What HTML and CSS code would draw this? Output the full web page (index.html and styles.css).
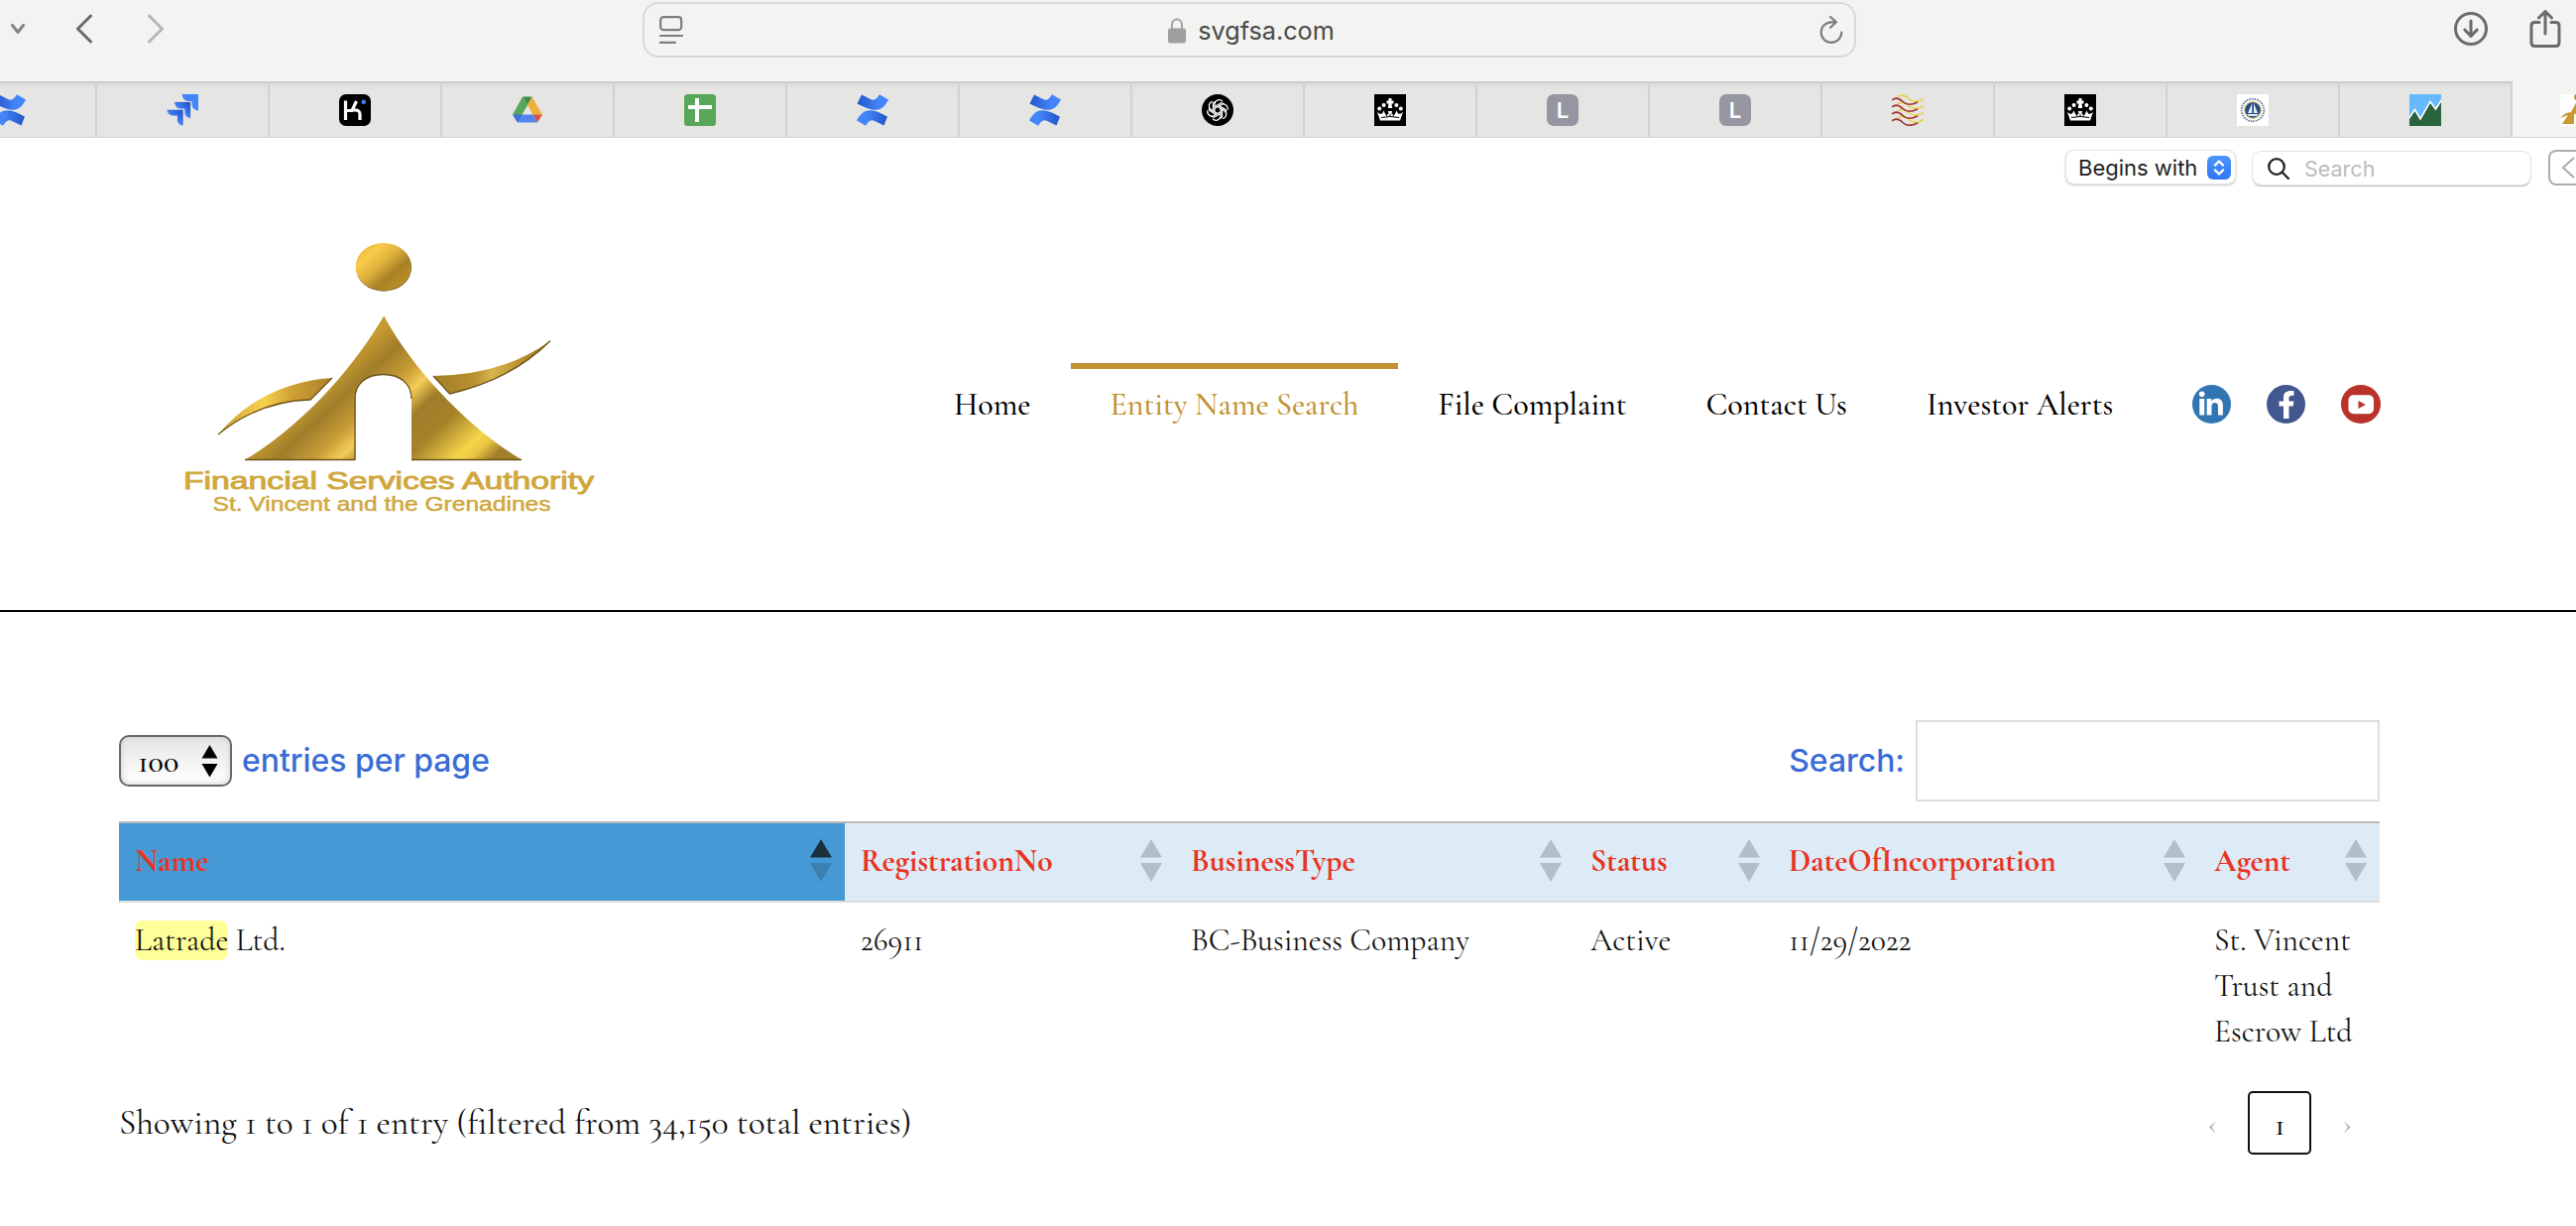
FILE: index.html
```html
<!DOCTYPE html>
<html lang="en">
<head>
<meta charset="utf-8">
<title>Entity Name Search</title>
<link rel="stylesheet" href="styles.css">
</head>
<body>
<svg class="defs" width="0" height="0">
  <defs>
    <linearGradient id="blueA" x1="0" y1="0" x2="1" y2="0"><stop offset="0" stop-color="#2355c8"/><stop offset=".7" stop-color="#4485fb"/></linearGradient>
    <linearGradient id="blueB" x1="1" y1="0" x2="0" y2="0"><stop offset="0" stop-color="#2355c8"/><stop offset=".7" stop-color="#4485fb"/></linearGradient>
    <linearGradient id="blueC" x1="1" y1="0" x2="0" y2="1"><stop offset="0.1" stop-color="#2355c8"/><stop offset=".6" stop-color="#4485fb"/></linearGradient>
    <symbol id="confluence" viewBox="0 0 32 32">
      <path fill="url(#blueA)" d="M5 .6 14 5c3 1.500 5 .5 7-2L23 .3 32 5.500C28 13 24 16 18 15.800c-6-.2-12-4-17.500-6.300Z"/>
      <path fill="url(#blueB)" d="M27.500 31.500 18 27c-3-1.500-5-.5-7 2L9 31.800 0 26.500C4 19 8 16 14 16.200c6 .2 12 4 17 6.300Z"/>
    </symbol>
    <symbol id="crown" viewBox="0 0 32 32">
      <rect width="32" height="32"/>
      <g fill="#fff"><path d="M14.500 4h3v2.500h2v3h-2l.7 4.500h-4.400l.7-4.500h-2v-3h2Z"/><circle cx="9.600" cy="11" r="2"/><circle cx="22.400" cy="11" r="2"/><circle cx="5.200" cy="14.400" r="2"/><circle cx="26.800" cy="14.400" r="2"/>
      <path d="M3 18c2 1.500 3 2.200 5 1.600l1.500-3 2 4.200 3-.8-.5-3h4l-.5 3 3 .8 2-4.200 1.500 3c2 .6 3-.1 5-1.600L26 26.500H6Z"/></g>
      <path d="M7 23.500q9-2 18 0M12 18.500l1 4M20 18.500l-1 4M16 20v3" stroke="#000" fill="none"/>
    </symbol>
  </defs>
</svg>

<header class="toolbar">
  <div class="nav-buttons">
    <svg class="caret" width="14" height="10" viewBox="0 0 14 10"><path d="m1.500 1.500 5.500 7 5.500-7"/></svg>
    <svg class="back" width="18" height="30" viewBox="0 0 18 30"><path d="M15.500 2 2.500 15l13 13"/></svg>
    <svg class="forward" width="18" height="30" viewBox="0 0 18 30"><path d="m2.500 2 13 13-13 13"/></svg>
  </div>
  <div class="address">
    <svg width="24" height="28" viewBox="0 0 24 28" class="line"><rect x="1.200" y="1.200" width="21" height="13" rx="3"/><path d="M1 20h22M1 26.800h15"/></svg>
    <div class="site">
      <svg width="18" height="26" viewBox="0 0 18 26"><path d="M4 11V7.500C4 4 6 1.500 9 1.500S14 4 14 7.500V11" fill="none" stroke="#a4a4a2" stroke-width="2"/><rect y="10.500" width="18" height="15" rx="2.500" fill="#9f9f9d"/></svg>
      <span>svgfsa.com</span>
    </div>
    <svg width="24" height="28" viewBox="0 0 24 28" class="line"><path d="M22.300 16.500A10.300 10.300 0 1 1 12 6.300h4.500M11 1l6 5.300-6 5.500"/></svg>
  </div>
  <div class="actions">
    <svg width="34" height="34" viewBox="0 0 34 34"><circle cx="17" cy="17" r="15.500"/><path d="M17 9v15M10.800 18l6.200 6.500 6.200-6.500"/></svg>
    <svg width="32" height="38" viewBox="0 0 32 38"><path d="M10 12.500H5.500q-3.500 0-3.500 3.500v17q0 3.500 3.500 3.500h21q3.500 0 3.500-3.500V16q0-3.500-3.500-3.500H22M16 24V2M9.500 8 16 1.500 22.500 8"/></svg>
  </div>
</header>

<nav class="tabs">
  <div class="tab first"><svg class="ico"><use href="#confluence"/></svg></div>
  <div class="tab"><svg class="ico" viewBox="0 0 32 32"><path fill="#4485fb" d="M15.500 0H32v16.500c-4-.5-6.500-3-6.500-6.500V7H22C18.500 7 16 4 15.500 0Z"/><path fill="url(#blueC)" stroke="#e5e5e3" stroke-width=".8" d="M7.500 7.500h17v17c-4-.5-6.500-3-6.500-6.500v-3h-4c-3.500 0-6-3.500-6.500-7.500Z"/><path fill="url(#blueC)" stroke="#e5e5e3" stroke-width=".8" d="M0 15.300h17V32c-4-.5-6.500-3-6.500-6.500V22H7c-4 0-6.500-2.700-7-6.700Z"/></svg></div>
  <div class="tab"><svg class="ico" viewBox="0 0 32 32"><rect width="32" height="32" rx="7"/><path d="M6.500 6.500v19.500M7 16.500h6l4.500-9.500M14.500 16q6.500-.5 6.500 4v6" fill="none" stroke="#fff" stroke-width="3.200"/><ellipse cx="24.800" cy="7.800" rx="2.300" ry="2.300" fill="#3b83f6"/></svg></div>
  <div class="tab"><svg class="ico" viewBox="0 0 32 32"><path fill="#57a65a" d="M11 2.500 16 11 6 28.500 1 20.500Z"/><path fill="#3d8c45" d="M11 2.500h9.500L16 11Z"/><path fill="#efb03b" d="M20.500 2.500 31 20.500h-9.500L16 11Z"/><path fill="#5086ee" d="M10.500 20.500h11L26 28.500H6Z"/><path fill="#3e6fdc" d="M1 20.500h9.500L6 28.500Z"/><path fill="#dc5142" d="M21.500 20.500H31L26 28.500Z"/></svg></div>
  <div class="tab"><svg class="ico" viewBox="0 0 32 32"><rect width="32" height="32" rx="3.500" fill="#57a65a"/><path d="M13 4v24M4 13h24" stroke="#fff" stroke-width="4"/></svg></div>
  <div class="tab"><svg class="ico"><use href="#confluence"/></svg></div>
  <div class="tab"><svg class="ico"><use href="#confluence"/></svg></div>
  <div class="tab"><svg class="ico" viewBox="0 0 32 32"><circle cx="16" cy="16" r="16"/><g fill="none" stroke="#fff" stroke-width="1.300"><path id="petal" d="M13 17.700V9.500a4.700 4.700 0 0 1 8-2.300M13 12.500l6.500-3.700a4.500 4.500 0 0 1 3 1.200"/><use href="#petal" transform="rotate(60 16 16)"/><use href="#petal" transform="rotate(120 16 16)"/><use href="#petal" transform="rotate(180 16 16)"/><use href="#petal" transform="rotate(240 16 16)"/><use href="#petal" transform="rotate(300 16 16)"/></g></svg></div>
  <div class="tab"><svg class="ico"><use href="#crown"/></svg></div>
  <div class="tab"><span class="letter">L</span></div>
  <div class="tab"><span class="letter">L</span></div>
  <div class="tab"><svg class="ico" viewBox="0 0 32 32"><g fill="none" stroke-width="1.600"><g stroke="#e8d24c"><path id="wave" d="M6 3c4-3.500 8-1.500 11 1.500s8 4.500 15 0"/><use href="#wave" y="7"/><use href="#wave" y="14"/><use href="#wave" y="21"/></g><g stroke="#a03038"><path id="wave2" d="M0 6c4-3.500 8-1.500 11 1.500s8 4 15 .5"/><use href="#wave2" y="7"/><use href="#wave2" y="14"/><use href="#wave2" y="21"/></g></g></svg></div>
  <div class="tab"><svg class="ico"><use href="#crown"/></svg></div>
  <div class="tab"><svg class="ico" viewBox="0 0 32 32"><rect width="32" height="32" fill="#fff"/><circle cx="16" cy="16" r="11.300" fill="none" stroke="#7286a8" stroke-width="2" stroke-dasharray="1.600 1"/><circle cx="16" cy="16" r="8.300" fill="#254a86" stroke="#d9c46a" stroke-width="1.200"/><path d="M15.300 9v10H11ZM17 9l4 10h-4ZM10 20h12l-2 2h-8Z" fill="#e6ebf2"/></svg></div>
  <div class="tab"><svg class="ico" viewBox="0 0 32 32"><rect width="32" height="32" fill="#66b9fb"/><path d="M-1 25 5.500 15.500 11 25 21 7.500 26.500 15 33 5v28H-1Z" fill="#2a643c" stroke="#fff" stroke-width="1.600"/></svg></div>
  <div class="tab active"><svg class="ico" viewBox="0 0 32 32"><rect width="32" height="32" fill="#fff"/><circle cx="17" cy="3" r="3" fill="#b98f2b"/><path d="M17 7 31 30H20v-9q-3-4-6 0v9H2L8 21 0 24q5-6 11-6Z" fill="#c69a30"/></svg></div>
</nav>

<div class="findbar">
  <div class="mode"><span>Begins with</span><i><svg width="24" height="24" viewBox="0 0 24 24"><path d="m8 9.500 4-4 4 4M8 14.500l4 4 4-4"/></svg></i></div>
  <div class="find"><svg width="22" height="22" viewBox="0 0 22 22"><circle cx="9" cy="9" r="7.800"/><path d="m14.500 14.500 6.500 6.500"/></svg><span>Search</span></div>
  <div class="prev"><svg width="14" height="22" viewBox="0 0 14 22"><path d="M13 1 2 11l11 10"/></svg></div>
</div>

<section class="masthead">
  <svg class="logo" width="460" height="320" viewBox="160 220 460 320">
    <defs>
      <linearGradient id="ball" x1="0" y1="0" x2="1" y2="1"><stop offset="0" stop-color="#dcae36"/><stop offset=".25" stop-color="#f8cb4a"/><stop offset=".45" stop-color="#dfb13c"/><stop offset=".65" stop-color="#a98126"/><stop offset="1" stop-color="#c79827"/></linearGradient>
      <linearGradient id="gold" gradientUnits="userSpaceOnUse" x1="325" y1="350" x2="470" y2="505"><stop offset="0" stop-color="#b88d2c"/><stop offset=".12" stop-color="#c99c31"/><stop offset=".24" stop-color="#a07d2a"/><stop offset=".36" stop-color="#c99d36"/><stop offset=".44" stop-color="#f3cd57"/><stop offset=".53" stop-color="#a07d2a"/><stop offset=".66" stop-color="#a68229"/><stop offset=".82" stop-color="#f6d64a"/><stop offset=".87" stop-color="#e8c341"/><stop offset=".94" stop-color="#a07d2a"/><stop offset="1" stop-color="#a68229"/></linearGradient>
      <linearGradient id="goldLeft" gradientUnits="userSpaceOnUse" x1="305" y1="390" x2="365" y2="465"><stop offset="0" stop-color="#c99d36"/><stop offset=".3" stop-color="#a58029"/><stop offset=".6" stop-color="#c99a32"/><stop offset=".9" stop-color="#f3cd57"/><stop offset="1" stop-color="#d7ac3f"/></linearGradient>
      <linearGradient id="left" x1="0" y1="0" x2="1" y2="0"><stop offset="0" stop-color="#c99d32"/><stop offset=".4" stop-color="#f8d24c"/><stop offset=".65" stop-color="#cfa035"/><stop offset="1" stop-color="#a98228"/></linearGradient>
      <linearGradient id="right" x1="0" y1="0" x2="1" y2="0"><stop offset="0" stop-color="#a37e28"/><stop offset=".35" stop-color="#b8902f"/><stop offset=".5" stop-color="#d6b450"/><stop offset=".75" stop-color="#b8912f"/><stop offset="1" stop-color="#8f6d20"/></linearGradient>
    </defs>
    <ellipse cx="387" cy="269.700" rx="28" ry="24" fill="#6d511b"/>
    <ellipse cx="386.700" cy="269" rx="28" ry="24" fill="url(#ball)"/>
    <path fill="url(#left)" d="M220 438Q264 386 335 381L313 403Q262 404 220 438Z"/>
    <path class="edge" d="M220 438Q262 404 313 403L335 381"/>
    <path fill="url(#right)" d="M437 379Q508 378 555 343.500 517 382 453.500 397Z"/>
    <path class="edge" d="M437 379 453.500 397Q517 382 555 343.500"/>
    <path fill="url(#gold)" d="M387.200 318.500C409 360 463 426 526 463.500H415V402C415 386 402 377.500 386.500 377.500S358.500 386 358.500 402V463.500H247C310 426 360 365 387.200 318.500Z"/>
    <path class="edge" d="M247 463.500h111V402c0-16 12.500-24.500 28.500-24.500s28.500 8.500 28.500 24.500M415 463.500H526"/>
    <text x="185" y="492.500" textLength="414" lengthAdjust="spacingAndGlyphs" class="brand big">Financial Services Authority</text>
    <text x="214.500" y="514.500" textLength="341" lengthAdjust="spacingAndGlyphs" class="brand small">St. Vincent and the Grenadines</text>
  </svg>
  <nav class="menu">
    <a>Home</a><a class="current">Entity Name Search</a><a>File Complaint</a><a>Contact Us</a><a>Investor Alerts</a>
  </nav>
  <div class="social">
    <svg width="39" height="39" viewBox="0 0 39 39"><circle cx="19.500" cy="19.500" r="19.500" fill="#3176b3"/><g fill="#fff"><circle cx="9.700" cy="9.300" r="2.800"/><path d="M7.300 14h4.900v16.500H7.300ZM14.700 14h4.700v2.300c2.500-4 11.500-4 11.500 4v10.200H26v-9.300c0-4.500-6.500-4.300-6.500 0v9.300h-4.800Z"/></g></svg>
    <svg width="39" height="39" viewBox="0 0 39 39"><circle cx="19.500" cy="19.500" r="19.500" fill="#42578f"/><path d="M17 34V21.500h-4.500v-5H17v-4.200C17 7.500 21 5.300 27.500 6.300v4.400c-4-.3-5 .3-5 2.800v3h5l-.8 5h-4.200V34Z" fill="#fff"/></svg>
    <svg width="40" height="39" viewBox="0 0 40 39"><ellipse cx="20" cy="19.500" rx="20" ry="19.500" fill="#ba332b"/><rect x="7.500" y="10.300" width="25.500" height="19" rx="5" fill="#fff"/><path d="m17.500 16 7.300 4-7.300 4Z" fill="#ba332b"/></svg>
  </div>
</section>

<main class="content">
  <div class="controls">
    <div class="length">
      <div class="select"><span>100</span><svg width="17" height="34" viewBox="0 0 17 34"><path d="M8.500 1 16.500 14.500H.5ZM.5 20H16.500L8.500 33.500Z"/></svg></div>
      <label>entries per page</label>
    </div>
    <div class="filter"><label>Search:</label><div class="input"></div></div>
  </div>
  <div class="grid head">
    <div class="sorted">Name<i class="sort"></i></div><div>RegistrationNo<i class="sort"></i></div><div>BusinessType<i class="sort"></i></div><div>Status<i class="sort"></i></div><div>DateOfIncorporation<i class="sort"></i></div><div>Agent<i class="sort"></i></div>
  </div>
  <div class="grid row">
    <div><mark>Latrade</mark> Ltd.</div><div>26911</div><div>BC-Business Company</div><div>Active</div><div>11/29/2022</div><div>St. Vincent Trust and Escrow Ltd</div>
  </div>
  <div class="footer">
    <div class="info">Showing 1 to 1 of 1 entry (filtered from 34,150 total entries)</div>
    <div class="pages"><span>‹</span><b>1</b><span>›</span></div>
  </div>
</main>
</body>
</html>
```
FILE: styles.css
```css
* { box-sizing: border-box; }
body { margin: 0; width: 2598px; height: 1236px; overflow: hidden; background: #fff; font-family: "Cormorant Garamond", "Liberation Serif", serif; color: #111; }
svg { display: block; flex: none; }
.defs { height: 0; }

.toolbar { display: grid; grid-template-columns: 648px 1224px 1fr; height: 82px; background: #f3f3f1; padding-top: 2px; font-family: Inter, sans-serif; }
.nav-buttons { display: flex; align-items: center; height: 54px; padding-left: 11px; fill: none; stroke-width: 3; stroke-linecap: round; stroke-linejoin: round; }
.caret { stroke: #858583; }
.back { stroke: #696967; margin-left: 51px; }
.forward { stroke: #b5b5b3; margin-left: 54px; }
.address { display: flex; align-items: center; justify-content: space-between; height: 56px; padding: 0 11px 0 15px; border: 2px solid #d8d8d6; border-radius: 16px; }
.line { fill: none; stroke: #7d7d7b; stroke-width: 2.2; stroke-linecap: round; stroke-linejoin: round; }
.site { display: flex; align-items: center; gap: 12px; font-size: 25.2px; color: #4a4a48; padding-top: 2px; }
.actions { display: flex; align-items: center; gap: 42px; height: 54px; padding-left: 603px; fill: none; stroke: #6b6b69; stroke-width: 3; stroke-linecap: round; stroke-linejoin: round; }

.tabs { display: flex; height: 57px; background: #e5e5e3; border-bottom: 1px solid #d4d4d2; overflow: hidden; }
.tab { flex: none; width: 174px; display: flex; align-items: center; justify-content: center; border-right: 2px solid #d1d1cf; padding-top: 2px; background: linear-gradient(#c4c4c2, #dededc 3px, #e5e5e3 8px); }
.first { margin-left: -76px; }
.tab.active { width: 220px; justify-content: flex-start; padding-left: 48px; background: #f3f3f1; border: 0; }
.ico { width: 32px; height: 32px; }
.letter { width: 32px; height: 32px; border-radius: 7px; background: #9696a3; color: #fff; font: 600 22px/33px Inter, sans-serif; text-align: center; }

.findbar { display: flex; align-items: flex-start; height: 56px; padding: 13px 0 0 2084px; font-family: Inter, sans-serif; font-size: 22px; overflow: hidden; }
.mode { flex: none; display: flex; align-items: center; justify-content: space-between; width: 170px; height: 33px; padding: 0 4px 0 12px; border-radius: 7px; color: #222; box-shadow: 0 0 0 1px #e3e3e3, 0 1px 3px #999; white-space: nowrap; }
.mode i { border-radius: 6px; background: linear-gradient(#4b94fb, #3176f6); }
.mode path { fill: none; stroke: #fff; stroke-width: 2.4; stroke-linecap: round; stroke-linejoin: round; }
.find { flex: none; display: flex; align-items: center; gap: 15px; width: 280px; height: 33px; margin: 1px 0 0 18px; padding-left: 15px; border-radius: 8px; color: #bcbcbc; box-shadow: 0 0 0 1px #e3e3e3, 0 2px 1px #bbb; font-size: 21.5px; }
.find svg { fill: none; stroke: #222; stroke-width: 2.3; stroke-linecap: round; }
.prev { flex: none; width: 50px; height: 36px; margin: -1px 0 0 18px; padding: 5px 0 0 11px; border: 2px solid #adadad; border-radius: 8px; }
.prev path { fill: none; stroke: #aaa; stroke-width: 2; }

.masthead { display: flex; height: 422px; border-bottom: 2px solid #000; }
.logo { margin: 25px 0 0 160px; }
.edge { fill: none; stroke: #6d511b; stroke-width: 1.3; }
.brand { font-family: "Liberation Sans", sans-serif; fill: #d0a83e; stroke: #d0a83e; }
.big { font-size: 23.5px; stroke-width: .9px; }
.small { font-size: 20.5px; stroke-width: .5px; }
.menu { display: flex; align-items: flex-start; margin: 171px 0 0 302px; color: #000; font-size: 32px; font-weight: 500; white-space: nowrap; }
.menu a { height: 84px; padding: 11px 40px 0; border-top: 6px solid transparent; line-height: 50px; }
.menu .current { color: #c29132; border-color: #c29132; }
.social { display: flex; gap: 36px; margin: 193px 197px 0 auto; }

.content { padding: 109px 198px 0 120px; }
.controls { display: flex; justify-content: space-between; height: 102px; font-family: Inter, sans-serif; font-size: 31.9px; font-weight: 500; color: #3a6cd6; }
.controls label { white-space: nowrap; padding-bottom: 1px; }
.length, .filter { display: flex; align-items: center; height: 82px; gap: 11px; }
.length { gap: 10px; }
.select { display: flex; align-items: center; justify-content: space-between; width: 114px; height: 52px; padding: 0 12px 0 17px; border: 2px solid #686868; border-radius: 10px; background: linear-gradient(#e6e6e6, #fff); box-shadow: inset 0 0 6px #ccc; color: #000; }
.select span { font: 500 32px/40px "Cormorant Garamond", "Liberation Serif", serif; padding-top: 1px; }
.input { width: 468px; height: 82px; border: 2px solid #dedede; }

.grid { display: grid; grid-template-columns: 732px 333px 403px 200px 429px 183px; }
.head { height: 82px; border-top: 2px solid #bbb; border-bottom: 2px solid #ddd; background: #ddebf6; color: #ea3323; font-size: 31.7px; font-weight: 700; line-height: 76px; }
.head div { display: flex; justify-content: space-between; padding: 0 13px 0 16px; }
.head .sorted { background: #4599d5; }
.sort { width: 22px; height: 43px; margin-top: 16px; background: #b2bfc7; clip-path: polygon(50% 0, 100% 43%, 0 43%, 0 56%, 100% 56%, 50% 100%, 0 56%, 0 43%); }
.sorted .sort { background: linear-gradient(#1c2f3d 50%, #3b80b0 50%); }
.row { height: 164px; padding-top: 15px; font-size: 31.7px; line-height: 46px; }
.row div { padding-left: 16px; }
mark { display: inline-block; height: 40px; line-height: 40px; border-radius: 8px; background: #ff9; color: inherit; }
.footer { display: flex; justify-content: space-between; padding-top: 26px; }
.info { font-size: 35.2px; line-height: 63px; white-space: nowrap; }
.pages { display: flex; align-items: center; height: 64px; padding-right: 28px; font-size: 32px; color: #aaa; }
.pages b { display: flex; align-items: center; justify-content: center; width: 64px; height: 64px; margin: 0 31px; border: 2px solid #111; border-radius: 5px; color: #111; font-weight: 500; padding-top: 2px; }
```
